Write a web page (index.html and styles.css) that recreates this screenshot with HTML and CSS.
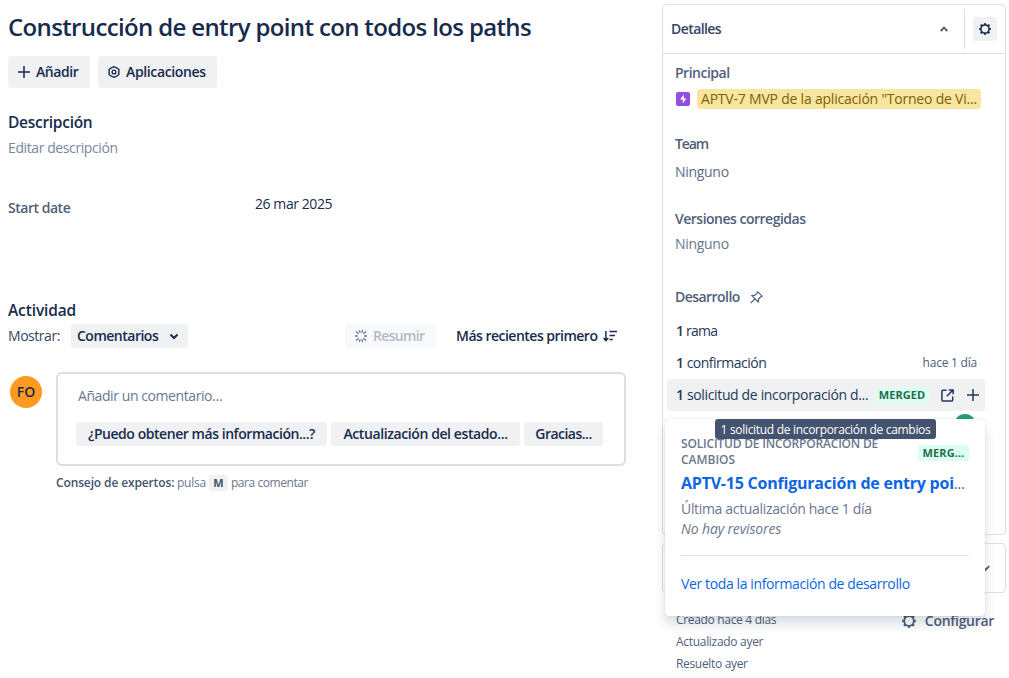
FILE: index.html
```html
<!DOCTYPE html>
<html lang="es">
<head>
<meta charset="utf-8">
<title>Construcción de entry point con todos los paths</title>
<link rel="stylesheet" href="styles.css">
</head>
<body>
<svg width="0" height="0" class="defs">
  <symbol id="gear" viewBox="0 0 12 12"><circle cx="6" cy="6" r="4.100" fill="none" stroke="currentColor" stroke-width="1.500"/><g fill="currentColor"><path d="M4.900 .2h2.200v1.800H4.900zM4.900 10h2.200v1.800H4.900zM.2 4.900H2v2.200H.2zM10 4.900h1.800v2.200H10z"/><circle cx="2.500" cy="2.500" r="1.200"/><circle cx="9.500" cy="2.500" r="1.200"/><circle cx="2.500" cy="9.500" r="1.200"/><circle cx="9.500" cy="9.500" r="1.200"/></g></symbol>
</svg>
<div class="page">
  <main class="main">
    <h1 class="title"><span class="t-title">Construcción de entry point con todos los paths</span></h1>
    <div class="actions">
      <button class="btn btn-add">
        <svg width="12" height="12" viewBox="0 0 12 12"><path d="M6 0v12M0 6h12" stroke="currentColor" stroke-width="1.5" fill="none"/></svg>
        <span class="t-add">Añadir</span>
      </button>
      <button class="btn btn-apps">
        <svg width="12" height="12" viewBox="0 0 12 12" fill="none" stroke="currentColor" stroke-width="1.4"><path d="M6 .8l1.700.5 2.400 1.400.8 1v4.600l-.8 1-2.400 1.400-1.700.5-1.700-.5-2.400-1.400-.8-1V3.700l.8-1 2.400-1.400z"/><circle cx="6" cy="6" r="1.900"/></svg>
        <span class="t-apps">Aplicaciones</span>
      </button>
    </div>
    <h2 class="heading desc-heading"><span class="t-desc">Descripción</span></h2>
    <p class="desc-text"><span class="t-edit">Editar descripción</span></p>
    <div class="field">
      <span class="field-label"><span class="t-start">Start date</span></span>
      <span class="field-value"><span class="t-date">26 mar 2025</span></span>
    </div>
    <h2 class="heading act-heading"><span class="t-act">Actividad</span></h2>
    <div class="toolbar">
      <span class="show-label"><span class="t-show">Mostrar:</span></span>
      <button class="btn small btn-comments"><span class="t-comm">Comentarios</span>
        <svg width="10" height="7" viewBox="0 0 10 7"><path d="M1.500 1.500L5 5l3.500-3.500" fill="none" stroke="currentColor" stroke-width="2"/></svg>
      </button>
      <button class="btn small btn-sum">
        <svg width="12" height="12" viewBox="0 0 12 12" fill="none" stroke="#6b7a92" stroke-width="1.300"><path d="M4.400 0l.7 2.800M7.600 0l-.7 2.800M4.400 12l.7-2.800M7.600 12l-.7-2.800M0 6h3M9 6h3M1 1.500l2.600 2.300M11 1.500L8.400 3.800M1 10.500l2.600-2.300M11 10.500L8.400 8.200"/></svg>
        <span class="t-sum">Resumir</span>
      </button>
      <button class="sort"><span class="t-sort">Más recientes primero</span>
        <svg width="14" height="12" viewBox="0 0 14 12" fill="none" stroke="currentColor" stroke-width="1.500"><path d="M2.900 1v9.500M.5 8l2.400 2.600L5.300 8M6.500 1.600H14M6.500 5.500h5.500M6.500 9.400h3.200"/></svg>
      </button>
    </div>
    <div class="composer">
      <span class="avatar"><span class="t-fo">FO</span></span>
      <div class="comment-box">
        <p class="placeholder"><span class="t-ph">Añadir un comentario…</span></p>
        <div class="chips">
          <button class="btn small chip chip-a"><span class="t-c1">¿Puedo obtener más información...?</span></button>
          <button class="btn small chip chip-b"><span class="t-c2">Actualización del estado...</span></button>
          <button class="btn small chip chip-c"><span class="t-c3">Gracias...</span></button>
        </div>
      </div>
    </div>
    <p class="tip"><b><span class="t-tip1">Consejo de expertos:</span></b><span class="t-tip2">pulsa</span><kbd>M</kbd><span class="t-tip3">para comentar</span></p>
  </main>

  <aside class="side">
    <section class="panel">
      <header class="panel-head">
        <span class="t-det">Detalles</span>
        <svg class="chev" width="8" height="6" viewBox="0 0 8 6"><path d="M.7 5L4 1.700 7.300 5" fill="none" stroke="currentColor" stroke-width="1.900"/></svg>
        <span class="gear-cell"><button class="gear-btn"><svg width="12" height="12"><use href="#gear"/></svg></button></span>
      </header>
      <div class="panel-body">
        <div class="label lb-parent"><span class="t-prin">Principal</span></div>
        <div class="parent">
          <svg width="14" height="14" viewBox="0 0 14 14"><rect width="14" height="14" rx="2" fill="#904ee2"/><path d="M7.800 2.600L4 7.600h2.800v3.800l3.500-5H7.800z" fill="#fff"/></svg>
          <span class="parent-link"><span class="t-par">APTV-7 MVP de la aplicación "Torneo de Vi...</span></span>
        </div>
        <div class="label lb-team"><span class="t-team">Team</span></div>
        <div class="value v-team"><span class="t-nin">Ninguno</span></div>
        <div class="label lb-ver"><span class="t-ver">Versiones corregidas</span></div>
        <div class="value v-ver"><span class="t-nin">Ninguno</span></div>
        <div class="label lb-dev"><span class="t-dev">Desarrollo</span>
          <svg width="13" height="13" viewBox="0 0 13 13" fill="none" stroke="currentColor" stroke-width="1.200"><path d="M7.800.8l4.400 4.400-1.500.6-2 2.200-.5 3L1.900 4.700l3-.5 2.300-2z"/><path d="M4.800 8L.7 12.200"/></svg>
        </div>
        <div class="dev-row"><span class="t-rama"><b>1</b> rama</span></div>
        <div class="dev-row"><span class="t-conf"><b>1</b> confirmación</span><span class="ago"><span class="t-ago">hace 1 día</span></span></div>
        <div class="dev-row active"><span class="t-pr"><b>1</b> solicitud de incorporación d...</span>
          <span class="lozenge loz-a"><span class="t-merged">MERGED</span></span>
          <svg class="ext" width="13" height="13" viewBox="0 0 13 13" fill="none" stroke="currentColor" stroke-width="1.500"><path d="M5.500 1.200H1.800q-.9 0-.9.900v9q0 .9.900.9h9q.9 0 .9-.9V7.500M7.700.9h4.400v4.400M12 1L5.800 7.200"/></svg>
          <svg class="plus" width="12" height="12" viewBox="0 0 12 12"><path d="M6 0v12M0 6h12" stroke="currentColor" stroke-width="1.500"/></svg>
        </div>
        <span class="member"></span>
      </div>
    </section>
    <section class="panel collapsed"><svg width="9" height="7" viewBox="0 0 9 7"><path d="M.8 1.200L4.500 5 8.200 1.200" fill="none" stroke="currentColor" stroke-width="1.900"/></svg></section>
    <footer class="foot">
      <div class="dates"><div><span class="t-cre">Creado hace 4 días</span></div><div><span class="t-upd">Actualizado ayer</span></div><div><span class="t-res">Resuelto ayer</span></div></div>
      <div class="config"><svg width="14" height="14"><use href="#gear"/></svg><span class="t-cfg">Configurar</span></div>
    </footer>
    <div class="popup">
      <div class="pop-top"><div class="pop-kind"><span class="t-k1">SOLICITUD DE INCORPORACIÓN DE</span><br><span class="t-k2">CAMBIOS</span></div><span class="lozenge loz-b"><span class="t-merg">MERG...</span></span></div>
      <div class="pop-title"><a class="t-pt">APTV-15 Configuración de entry poi</a><span class="dots">...</span></div>
      <div class="pop-line"><span class="t-ult">Última actualización hace 1 día</span></div>
      <div class="pop-line rev"><span class="t-rev">No hay revisores</span></div>
      <div class="pop-foot"><a class="t-all">Ver toda la información de desarrollo</a></div>
    </div>
    <div class="tooltip"><span class="t-tt">1 solicitud de incorporación de cambios</span></div>
  </aside>
</div>
</body>
</html>
```
FILE: styles.css
```css
* { box-sizing: border-box; }
body { margin: 0; width: 1009px; height: 678px; overflow: hidden; background: #fff; color: #172b4d; font: 14px/20px "Open Sans", "Noto Sans", sans-serif; }
h1, h2, p { margin: 0; }
svg { display: block; flex: none; }
.defs { position: absolute; }
button { font: inherit; color: inherit; border: 0; margin: 0; padding: 0; background: none; }
span, a { white-space: nowrap; }
b { font-weight: 600; }
.page { position: relative; display: flex; gap: 36px; height: 678px; }
.main { width: 626px; padding: 11px 0 0 8px; flex: none; }
.title { font-size: 24px; line-height: 32px; font-weight: 600; }
.actions { display: flex; gap: 8px; margin-top: 13px; }
.btn { display: flex; align-items: center; flex: none; height: 32px; border-radius: 3px; background: #f0f1f3; font-weight: 600; }
.btn-add { width: 82px; padding-left: 10px; gap: 6px; }
.btn-apps { width: 119px; padding-left: 10px; gap: 6px; }
.heading { font-size: 15.5px; line-height: 20px; font-weight: 600; }
.desc-heading { margin-top: 24px; }
.desc-text { margin-top: 6px; color: #7a869a; }
.field { display: grid; grid-template-columns: 247px 1fr; margin-top: 36px; height: 28px; }
.field-label { padding-top: 4px; font-weight: 600; color: #505f79; }
.act-heading { margin-top: 78px; }
.toolbar { display: flex; align-items: center; margin-top: 4px; height: 24px; }
.show-label { width: 63px; flex: none; color: #344563; }
.small { height: 24px; }
.btn-comments { width: 117px; padding: 0 9px 0 6px; justify-content: space-between; }
.btn-sum { width: 91px; margin-left: 157px; padding-left: 10px; gap: 6px; background: #f8f9fa; color: #b3bac5; }
.sort { display: flex; align-items: center; flex: none; margin-left: 20px; gap: 6px; font-weight: 600; }
.composer { display: flex; margin-top: 24px; padding-left: 2px; }
.avatar { display: flex; align-items: center; justify-content: center; width: 32px; height: 32px; margin: 4px 14px 0 0; border-radius: 50%; background: #ff991f; font-weight: 600; }
.comment-box { width: 570px; height: 94px; border: 2px solid #dadee4; border-radius: 6px; padding: 12px 0 0 18px; }
.placeholder { padding-left: 2px; color: #6b778c; }
.chips { display: flex; gap: 4px; margin-top: 16px; }
.chip { justify-content: center; }
.chip-a { width: 251px; }
.chip-b { width: 189px; }
.chip-c { width: 79px; }
.tip { display: flex; align-items: center; margin: 9px 0 0 48px; height: 16px; font-size: 12px; line-height: 16px; color: #6b778c; }
.tip b { color: #44546f; width: 121px; }
kbd { width: 19px; height: 16px; margin: 0 3px; border-radius: 3px; background: #f0f1f3; color: #44546f; font: 700 11px/16px "Open Sans", sans-serif; text-align: center; }

.side { position: relative; width: 344px; padding-top: 4px; flex: none; }
.panel { border: 1px solid #dcdfe4; border-radius: 4px; height: 531px; }
.panel-head { display: flex; align-items: center; height: 49px; padding-left: 8px; border-bottom: 1px solid #dcdfe4; color: #344563; font-weight: 600; }
.chev { margin-left: auto; color: #505f79; }
.gear-cell { display: flex; align-items: center; width: 41px; height: 40px; margin-left: 16px; padding-left: 8px; border-left: 1px solid #dcdfe4; }
.gear-btn { display: flex; align-items: center; justify-content: center; width: 24px; height: 24px; border-radius: 3px; background: #f0f1f3; color: #172b4d; }
.panel-body { padding: 9px 20px 0 4px; }
.label { padding-left: 8px; color: #505f79; font-weight: 600; height: 20px; }
.parent { display: flex; align-items: center; gap: 7px; height: 20px; margin-top: 6px; padding-left: 9px; }
.parent-link { width: 284px; height: 20px; padding-left: 4px; border-radius: 3px; background: #f8e6a0; color: #7f5f01; }
.lb-team { margin-top: 25px; }
.value { padding-left: 8px; color: #6b778c; height: 20px; }
.v-team { margin-top: 8px; color: #5e6c84; }
.lb-ver { margin-top: 27px; }
.v-ver { margin-top: 5px; }
.lb-dev { display: flex; align-items: center; gap: 10px; margin-top: 33px; }
.dev-row { display: flex; align-items: center; height: 32px; padding-left: 9px; color: #253858; border-radius: 3px; }
.lb-dev + .dev-row { margin-top: 8px; }
.ago { margin-left: auto; padding-right: 8px; font-size: 12px; color: #505f79; }
.dev-row.active { background: #f0f1f3; width: 318px; }
.lozenge { display: flex; align-items: center; justify-content: center; height: 16px; border-radius: 3px; background: #dcfff1; color: #216e4e; font-size: 11px; font-weight: 700; }
.loz-a { width: 54px; margin-left: auto; }
.ext { margin-left: 12px; }
.plus { margin: 0 6px 0 13px; }
.member { display: block; width: 22px; height: 22px; margin: 3px 0 0 287px; border-radius: 50%; background: #22a06b; }
.collapsed { display: flex; align-items: center; justify-content: flex-end; height: 50px; margin-top: 8px; padding-right: 15px; color: #505f79; }
.foot { display: flex; justify-content: space-between; padding: 16px 12px 0 14px; }
.dates { font-size: 12px; line-height: 22px; color: #505f79; }
.config { display: flex; align-items: center; gap: 9px; height: 24px; color: #505f79; font-weight: 600; }
.popup { position: absolute; left: 3px; top: 419px; width: 320px; height: 197px; padding: 17px 16px 0; border-radius: 4px; background: #fff; box-shadow: 0 8px 12px rgba(9,30,66,.15), 0 0 1px rgba(9,30,66,.31); }
.pop-top { display: flex; justify-content: space-between; align-items: center; height: 32px; }
.pop-kind { font-size: 12px; line-height: 16px; font-weight: 600; color: #6b778c; }
.loz-b { width: 51px; margin-top: 2px; }
.pop-title { display: flex; height: 24px; margin-top: 4px; font-size: 16px; line-height: 23px; font-weight: 700; color: #0c66e4; }
.dots { color: #44546f; font-weight: 400; font-size: 14px; }
.pop-line { margin-top: 3px; color: #6b778c; line-height: 20px; }
.pop-line.rev { margin-top: 0; font-style: italic; }
.pop-foot { margin-top: 16px; padding-top: 18px; border-top: 1px solid #dcdfe4; color: #0c66e4; }
.tooltip { position: absolute; left: 53px; top: 419px; width: 221px; height: 20px; border-radius: 3px; background: #44546f; color: #fff; font-size: 12px; line-height: 21px; text-align: center; }

/* Per-label tracking */
.t-title { letter-spacing: -.64px; }
.t-add { letter-spacing: -.45px; }
.t-apps { letter-spacing: -.36px; }
.t-desc { letter-spacing: -.28px; }
.t-edit { letter-spacing: -.4px; }
.t-start { letter-spacing: -.48px; }
.t-date { letter-spacing: -.43px; }
.t-act { letter-spacing: -.13px; }
.t-show { letter-spacing: -.46px; }
.t-comm { letter-spacing: -.5px; }
.t-sum { letter-spacing: -.65px; }
.t-sort { letter-spacing: -.51px; }
.t-fo { letter-spacing: 0; }
.t-ph { letter-spacing: -.42px; }
.t-c1 { letter-spacing: -.45px; }
.t-c2 { letter-spacing: -.4px; }
.t-c3 { letter-spacing: -.52px; }
.t-tip1 { letter-spacing: -.13px; }
.t-tip2 { letter-spacing: -.25px; }
.t-tip3 { letter-spacing: -.43px; }
.t-det { letter-spacing: -.57px; }
.t-prin { letter-spacing: -.5px; }
.t-par { letter-spacing: -.21px; }
.t-team { letter-spacing: -1.1px; }
.t-nin { letter-spacing: -.3px; }
.t-ver { letter-spacing: -.5px; }
.t-dev { letter-spacing: -.54px; }
.t-rama { letter-spacing: -.78px; }
.t-conf { letter-spacing: -.5px; }
.t-ago { letter-spacing: -.22px; }
.t-pr { letter-spacing: -.35px; }
.t-merged { letter-spacing: .05px; }
.t-cre { letter-spacing: -.32px; }
.t-upd { letter-spacing: -.3px; }
.t-res { letter-spacing: -.33px; }
.t-cfg { letter-spacing: -.3px; }
.t-k1 { letter-spacing: -.19px; }
.t-k2 { letter-spacing: -.03px; }
.t-merg { letter-spacing: .1px; }
.t-pt { letter-spacing: -.22px; }
.t-ult { letter-spacing: -.33px; }
.t-rev { letter-spacing: -.14px; }
.t-all { letter-spacing: -.38px; }
.t-tt { letter-spacing: -.31px; }
```
